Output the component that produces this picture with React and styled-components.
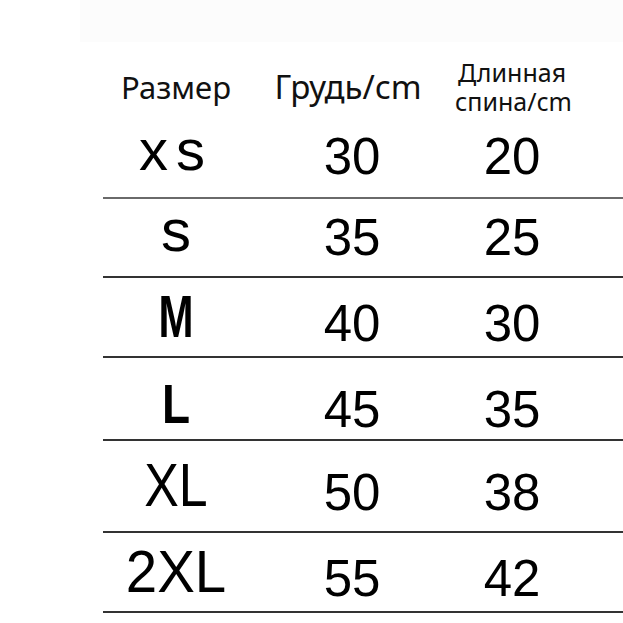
import React from "react";
import styled, { createGlobalStyle } from "styled-components";

const GlobalStyle = createGlobalStyle`
  html, body {
    margin: 0;
    padding: 0;
    background: #ffffff;
  }
  body {
    font-family: "Liberation Sans", Arial, sans-serif;
    color: #000;
  }
`;

const Page = styled.div`
  width: 623px;
  height: 623px;
  overflow: hidden;
  display: flex;
  flex-direction: column;
`;

const Band = styled.div`
  height: 42px;
  margin-left: 80px;
  background: #fcfcfc;
`;

const Table = styled.div`
  margin-left: 103px;
  width: 540px;
  display: flex;
  flex-direction: column;
`;

const HeaderRow = styled.div`
  display: grid;
  grid-template-columns: 146px 206px 114px 1fr;
  align-items: center;
  height: 58px;
  margin-top: 16px;
  margin-bottom: 4px;
  font-family: "Noto Sans", "Open Sans", sans-serif;
  color: #111;
`;

const HeadCell = styled.div`
  text-align: center;
  font-size: ${(p) => p.$size}px;
  line-height: ${(p) => p.$lh}px;
  white-space: nowrap;
  margin-left: ${(p) => p.$shift || 0}px;
`;

const HeadLine = styled.div``;

const Row = styled.div`
  box-sizing: border-box;
  display: grid;
  grid-template-columns: 146px 206px 114px 1fr;
  align-items: baseline;
  height: ${(p) => p.$h}px;
  padding-top: ${(p) => p.$pad}px;
  border-bottom: 2px solid ${(p) => p.$line || "#333"};
`;

const SizeLabel = styled.div`
  text-align: center;
  line-height: 1;
  font-size: ${(p) => p.$size}px;
  font-weight: ${(p) => (p.$bold ? 700 : 400)};
  letter-spacing: ${(p) => p.$spacing || 0}px;
  transform: translateY(-4px) scaleX(${(p) => p.$scale || 1});
`;

const Value = styled.div`
  text-align: center;
  font-size: 51px;
  line-height: 1;
`;

const rows = [
  { label: "xs", size: 58, spacing: 8, chest: 30, back: 20, h: 79, pad: 5, line: "#6a6a6a" },
  { label: "s", size: 60, chest: 35, back: 25, h: 79, pad: 6 },
  { label: "M", size: 60, bold: true, scale: 0.7, chest: 40, back: 30, h: 80, pad: 13 },
  { label: "L", size: 56, bold: true, scale: 0.82, chest: 45, back: 35, h: 83, pad: 22 },
  { label: "XL", size: 61, scale: 0.85, chest: 50, back: 38, h: 92, pad: 18 },
  { label: "2XL", size: 60, scale: 0.94, chest: 55, back: 42, h: 80, pad: 13 },
];

export default function App() {
  return (
    <Page>
      <GlobalStyle />
      <Band />
      <Table>
        <HeaderRow>
          <HeadCell $size={31} $lh={36}>Размер</HeadCell>
          <HeadCell $size={33} $lh={38} $shift={-8}>Грудь/cm</HeadCell>
          <HeadCell $size={25} $lh={29}>
            <HeadLine>Длинная</HeadLine>
            <HeadLine>спина/cm</HeadLine>
          </HeadCell>
        </HeaderRow>
        {rows.map((r) => (
          <Row key={r.label} $h={r.h} $pad={r.pad} $line={r.line}>
            <SizeLabel
              $size={r.size}
              $bold={r.bold}
              $scale={r.scale}
              $spacing={r.spacing}
            >
              {r.label}
            </SizeLabel>
            <Value>{r.chest}</Value>
            <Value>{r.back}</Value>
          </Row>
        ))}
      </Table>
    </Page>
  );
}
